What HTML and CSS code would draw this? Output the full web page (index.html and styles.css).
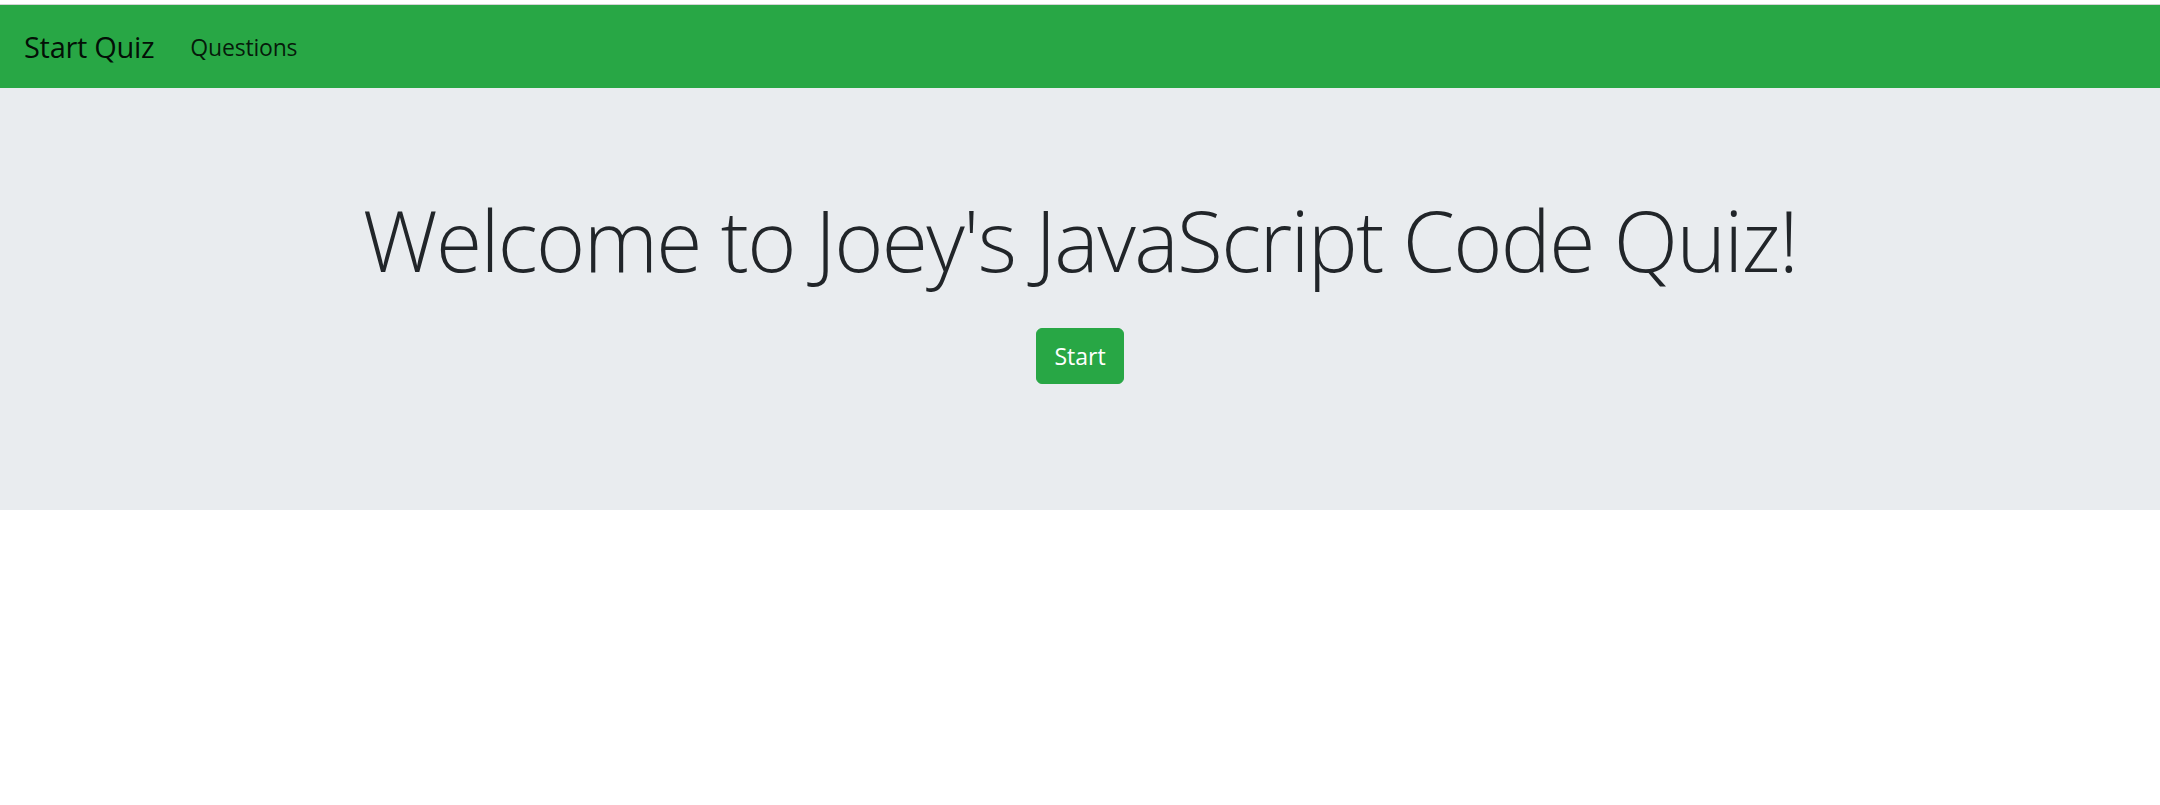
FILE: index.html
```html
<!DOCTYPE html>
<html lang="en">
<head>
<meta charset="utf-8">
<title>Code Quiz</title>
<link rel="stylesheet" href="styles.css">
</head>
<body>
<div class="topline"></div>
<nav class="navbar">
  <a class="brand" href="#">Start Quiz</a>
  <a class="nav-link" href="#">Questions</a>
</nav>
<header class="jumbotron">
  <h1 class="title">Welcome to Joey's JavaScript Code Quiz!</h1>
  <div class="actions">
    <button class="btn-start" type="button">Start</button>
  </div>
</header>
</body>
</html>
```
FILE: styles.css
```css
html, body {
  margin: 0;
  padding: 0;
  background: #fff;
  font-family: "Open Sans", "Noto Sans", "Liberation Sans", sans-serif;
  color: #212529;
}
.topline {
  height: 5px;
  background: #fff;
  border-bottom: 1px solid #d4d4d4;
  box-sizing: border-box;
}
.navbar {
  display: flex;
  align-items: center;
  background: #28a745;
  height: 83px;
  padding: 0 24px;
  box-sizing: border-box;
}
.brand {
  font-size: 29px;
  color: rgba(0, 0, 0, 0.92);
  text-decoration: none;
  margin-right: 24px;
  letter-spacing: -0.3px;
}
.nav-link {
  font-size: 23px;
  color: rgba(0, 0, 0, 0.85);
  text-decoration: none;
  padding: 0 12px;
  letter-spacing: -0.2px;
}
.jumbotron {
  background: #e9ecef;
  height: 422px;
  box-sizing: border-box;
  padding-top: 102px;
  display: flex;
  flex-direction: column;
  align-items: center;
}
.title {
  margin: 0;
  font-size: 84px;
  font-weight: 300;
  line-height: 100px;
  color: #212529;
  letter-spacing: -1.65px;
}
.actions {
  margin-top: 38px;
}
.btn-start {
  font-family: inherit;
  font-size: 23px;
  color: #fff;
  background: #28a745;
  border: 1px solid #28a745;
  border-radius: 6px;
  width: 88px;
  height: 56px;
  padding: 0;
  cursor: pointer;
}
```
